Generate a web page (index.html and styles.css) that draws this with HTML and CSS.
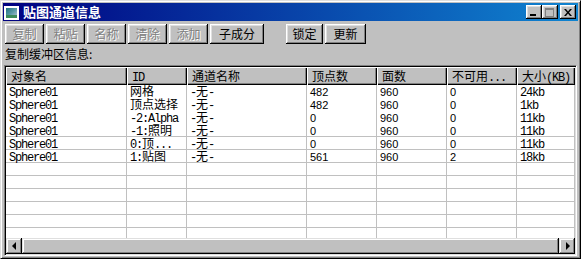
FILE: index.html
```html
<!DOCTYPE html>
<html lang="zh-CN">
<head>
    <meta charset="UTF-8">
    <title>贴图通道信息</title>
    <link rel="stylesheet" href="styles.css">
</head>
<body>
    <div class="window">
        <div class="titlebar">
            <svg class="app-icon" width="15" height="14" viewBox="0 0 15 14">
                <defs>
                    <linearGradient id="pic" x1="0" y1="0" x2="1" y2="1">
                        <stop offset="0" stop-color="#1f6f7f"/>
                        <stop offset="0.5" stop-color="#5a9aa6"/>
                        <stop offset="1" stop-color="#b8c4d8"/>
                    </linearGradient>
                </defs>
                <rect x="0" y="0" width="15" height="14" fill="#ffffff"/>
                <rect x="2" y="2" width="11" height="10" fill="url(#pic)"/>
                <rect x="2" y="9" width="11" height="3" fill="#3c8a5a"/>
            </svg>
            <span class="title">贴图通道信息</span>
            <div class="title-buttons">
                <button class="tb"><span class="g-min"></span></button>
                <button class="tb tb-max"><span class="g-max"></span></button>
                <button class="tb tb-close">
                    <svg width="8" height="7" viewBox="0 0 8 7"><path d="M0 0h2l2 2.5 2-2.5h2l-3 3.5 3 3.5h-2l-2-2.5-2 2.5h-2l3-3.5z" fill="#000"/></svg>
                </button>
            </div>
        </div>

        <div class="toolbar">
            <button class="btn" disabled>复制</button>
            <button class="btn" disabled>粘贴</button>
            <button class="btn" disabled>名称</button>
            <button class="btn" disabled>清除</button>
            <button class="btn" disabled>添加</button>
            <button class="btn btn-wide">子成分</button>
            <button class="btn btn-lock">锁定</button>
            <button class="btn btn-update">更新</button>
        </div>

        <div class="label">复制缓冲区信息:</div>

        <div class="listview">
            <div class="lv-head">
                <div class="hcell">对象名</div>
                <div class="hcell"><span class="mono">ID</span></div>
                <div class="hcell">通道名称</div>
                <div class="hcell">顶点数</div>
                <div class="hcell">面数</div>
                <div class="hcell">不可用<span class="mono">...</span></div>
                <div class="hcell">大小<span class="mono">(KB)</span></div>
            </div>
            <div class="lv-body">
                <div class="row noline">
                    <div class="cell"><span class="mono">Sphere01</span></div>
                    <div class="cell">网格</div>
                    <div class="cell"><span class="mono">-</span>无<span class="mono">-</span></div>
                    <div class="cell"><span class="num">482</span></div>
                    <div class="cell"><span class="num">960</span></div>
                    <div class="cell"><span class="num">0</span></div>
                    <div class="cell"><span class="mono">24kb</span></div>
                </div>
                <div class="row noline">
                    <div class="cell"><span class="mono">Sphere01</span></div>
                    <div class="cell">顶点选择</div>
                    <div class="cell"><span class="mono">-</span>无<span class="mono">-</span></div>
                    <div class="cell"><span class="num">482</span></div>
                    <div class="cell"><span class="num">960</span></div>
                    <div class="cell"><span class="num">0</span></div>
                    <div class="cell"><span class="mono">1kb</span></div>
                </div>
                <div class="row noline">
                    <div class="cell"><span class="mono">Sphere01</span></div>
                    <div class="cell"><span class="mono">-2:Alpha</span></div>
                    <div class="cell"><span class="mono">-</span>无<span class="mono">-</span></div>
                    <div class="cell"><span class="num">0</span></div>
                    <div class="cell"><span class="num">960</span></div>
                    <div class="cell"><span class="num">0</span></div>
                    <div class="cell"><span class="mono">11kb</span></div>
                </div>
                <div class="row">
                    <div class="cell"><span class="mono">Sphere01</span></div>
                    <div class="cell"><span class="mono">-1:</span>照明</div>
                    <div class="cell"><span class="mono">-</span>无<span class="mono">-</span></div>
                    <div class="cell"><span class="num">0</span></div>
                    <div class="cell"><span class="num">960</span></div>
                    <div class="cell"><span class="num">0</span></div>
                    <div class="cell"><span class="mono">11kb</span></div>
                </div>
                <div class="row">
                    <div class="cell"><span class="mono">Sphere01</span></div>
                    <div class="cell"><span class="mono">0:</span>顶<span class="mono">...</span></div>
                    <div class="cell"><span class="mono">-</span>无<span class="mono">-</span></div>
                    <div class="cell"><span class="num">0</span></div>
                    <div class="cell"><span class="num">960</span></div>
                    <div class="cell"><span class="num">0</span></div>
                    <div class="cell"><span class="mono">11kb</span></div>
                </div>
                <div class="row">
                    <div class="cell"><span class="mono">Sphere01</span></div>
                    <div class="cell"><span class="mono">1:</span>贴图</div>
                    <div class="cell"><span class="mono">-</span>无<span class="mono">-</span></div>
                    <div class="cell"><span class="num">561</span></div>
                    <div class="cell"><span class="num">960</span></div>
                    <div class="cell"><span class="num">2</span></div>
                    <div class="cell"><span class="mono">18kb</span></div>
                </div>
                <div class="row"><div class="cell"></div><div class="cell"></div><div class="cell"></div><div class="cell"></div><div class="cell"></div><div class="cell"></div><div class="cell"></div></div>
                <div class="row"><div class="cell"></div><div class="cell"></div><div class="cell"></div><div class="cell"></div><div class="cell"></div><div class="cell"></div><div class="cell"></div></div>
                <div class="row"><div class="cell"></div><div class="cell"></div><div class="cell"></div><div class="cell"></div><div class="cell"></div><div class="cell"></div><div class="cell"></div></div>
                <div class="row"><div class="cell"></div><div class="cell"></div><div class="cell"></div><div class="cell"></div><div class="cell"></div><div class="cell"></div><div class="cell"></div></div>
                <div class="row"><div class="cell"></div><div class="cell"></div><div class="cell"></div><div class="cell"></div><div class="cell"></div><div class="cell"></div><div class="cell"></div></div>
                <div class="row"><div class="cell"></div><div class="cell"></div><div class="cell"></div><div class="cell"></div><div class="cell"></div><div class="cell"></div><div class="cell"></div></div>
            </div>
            <div class="hscroll">
                <div class="sb-btn"><span class="arrow-left"></span></div>
                <div class="sb-thumb"></div>
                <div class="sb-btn"><span class="arrow-right"></span></div>
            </div>
        </div>
    </div>
</body>
</html>
```

FILE: styles.css
```css
body {
    margin: 0;
    padding: 0;
    background-color: #c0c0c0;
    font-family: "Noto Sans CJK SC", "Liberation Sans", sans-serif;
    font-size: 12px;
    color: #000;
    overflow: hidden;
}

.window {
    width: 581px;
    height: 259px;
    box-sizing: border-box;
    border: 1px solid;
    border-color: #dfdfdf #000 #000 #dfdfdf;
    box-shadow: inset 1px 1px #fff, inset -1px -1px #808080;
    padding: 2px 2px 1px 2px;
    background-color: #c0c0c0;
    display: flex;
    flex-direction: column;
}

/* title bar */
.titlebar {
    height: 18px;
    display: flex;
    align-items: center;
    background: linear-gradient(to right, #000080, #1084d0);
    color: #fff;
}

.app-icon {
    margin-left: 1px;
    margin-top: 1px;
}

.title {
    margin-left: 4px;
    font-size: 13px;
    font-weight: bold;
    line-height: 18px;
}

.title-buttons {
    margin-left: auto;
    margin-right: 2px;
    display: flex;
    align-items: center;
}

.tb {
    width: 16px;
    height: 14px;
    padding: 0;
    border: none;
    background-color: #c0c0c0;
    box-shadow: inset -1px -1px #000, inset 1px 1px #fff, inset -2px -2px #808080, inset 2px 2px #dfdfdf;
    display: flex;
    align-items: center;
    justify-content: center;
}

.tb-close {
    margin-left: 2px;
}

.g-min {
    width: 6px;
    height: 2px;
    background-color: #000;
    margin-top: 5px;
    margin-left: -2px;
}

.g-max {
    width: 7px;
    height: 6px;
    border: 1px solid #808080;
    border-top-width: 2px;
    margin-left: -1px;
}

.tb-close svg {
    margin-left: -1px;
}

/* toolbar */
.toolbar {
    display: flex;
    gap: 2px;
    margin-top: 3px;
    padding-left: 2px;
}

.btn {
    width: 39px;
    height: 20px;
    padding: 0;
    border: none;
    background-color: #c0c0c0;
    box-shadow: inset -1px -1px #000, inset 1px 1px #fff, inset -2px -2px #808080, inset 2px 2px #dfdfdf;
    font-family: "Noto Sans CJK SC", sans-serif;
    font-size: 12px;
    line-height: 18px;
    color: #000;
}

.btn:disabled {
    color: #808080;
    text-shadow: 1px 1px #fff;
}

.btn-wide {
    width: 54px;
}

.btn-lock {
    width: 37px;
    margin-left: 20px;
}

.btn-update {
    width: 41px;
}

.label {
    margin-top: 2px;
    padding-left: 2px;
    height: 15px;
    line-height: 15px;
}

/* list view */
.listview {
    margin: 4px 1px 0 1px;
    height: 191px;
    box-sizing: border-box;
    border: 1px solid;
    border-color: #808080 #fff #fff #808080;
    box-shadow: inset 1px 1px #000, inset -1px -1px #dfdfdf;
    padding: 1px;
    display: flex;
    flex-direction: column;
}

.lv-head,
.row {
    display: grid;
    grid-template-columns: 121px 60px 120px 70px 70px 70px 1fr;
}

.hcell {
    height: 18px;
    line-height: 17px;
    padding-left: 5px;
    box-sizing: border-box;
    background-color: #c0c0c0;
    box-shadow: inset 1px 1px #fff, inset -1px -1px #000, inset -2px -2px #808080;
    white-space: nowrap;
    overflow: hidden;
}

.lv-body {
    height: 153px;
    background-color: #fff;
    overflow: hidden;
}

.row {
    height: 13px;
    box-sizing: border-box;
    border-bottom: 1px solid #c0c0c0;
}

.row.noline {
    border-bottom-color: #fff;
}

.cell {
    border-right: 1px solid #c0c0c0;
    padding-left: 3px;
    height: 13px;
    line-height: 12px;
    white-space: nowrap;
    overflow: hidden;
}

/* spans keep the cell's baseline and don't grow the line box */
.mono {
    font-family: "Liberation Mono", monospace;
    font-size: 12px;
    letter-spacing: -1.2px;
    line-height: 1px;
}

.num {
    font-family: "Liberation Sans", sans-serif;
    font-size: 11px;
    line-height: 1px;
}

/* horizontal scrollbar */
.hscroll {
    height: 16px;
    display: flex;
}

.sb-btn,
.sb-thumb {
    height: 16px;
    background-color: #c0c0c0;
    box-sizing: border-box;
    box-shadow: inset -1px -1px #000, inset 1px 1px #dfdfdf, inset -2px -2px #808080, inset 2px 2px #fff;
}

.sb-btn {
    width: 16px;
    display: flex;
    align-items: center;
    justify-content: center;
}

.sb-thumb {
    flex-grow: 1;
}

.arrow-left {
    width: 0;
    height: 0;
    border-top: 4px solid transparent;
    border-bottom: 4px solid transparent;
    border-right: 4px solid #000;
    margin-left: -1px;
}

.arrow-right {
    width: 0;
    height: 0;
    border-top: 4px solid transparent;
    border-bottom: 4px solid transparent;
    border-left: 4px solid #000;
    margin-left: 1px;
}
```
